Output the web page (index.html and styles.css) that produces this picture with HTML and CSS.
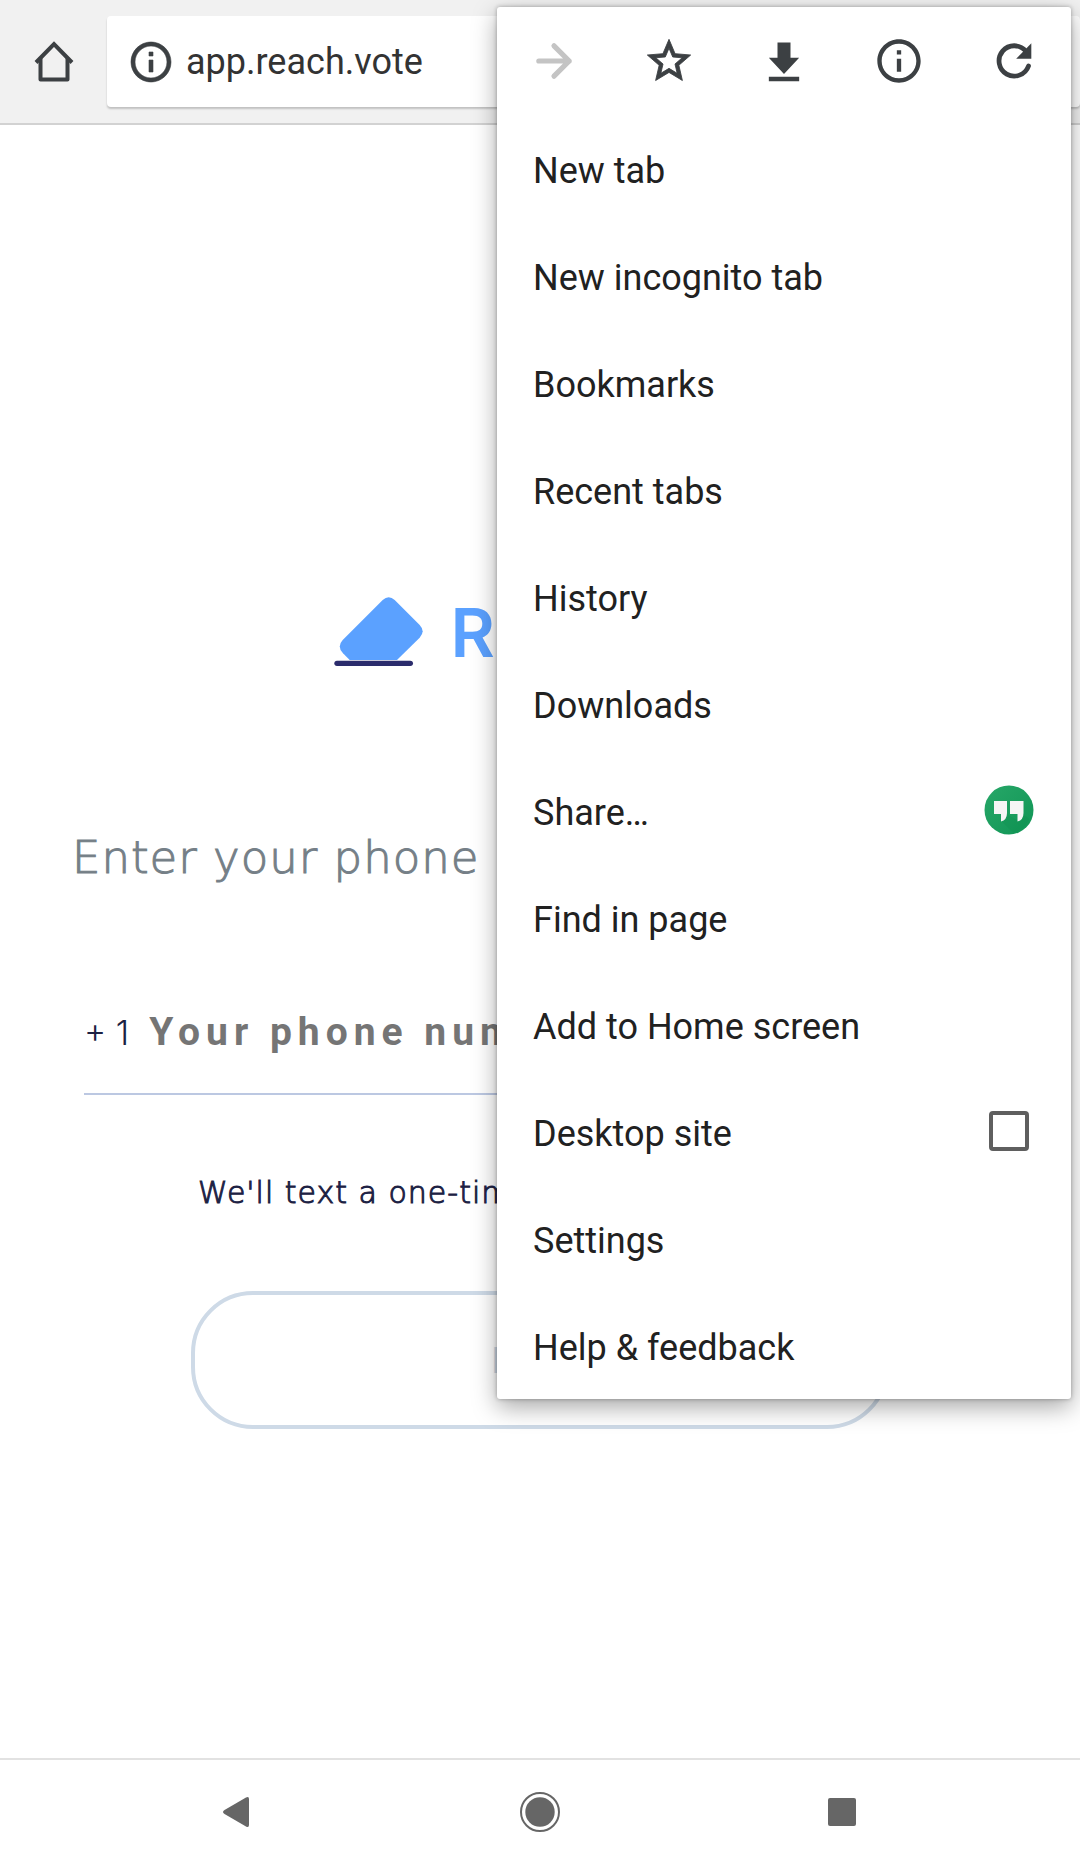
FILE: index.html
```html
<!DOCTYPE html>
<html lang="en">
<head>
<meta charset="utf-8">
<meta name="viewport" content="width=device-width, initial-scale=1">
<title>Reach</title>
<link rel="stylesheet" href="styles.css">
</head>
<body>
<div class="screen">
  <header class="toolbar">
    <button class="home" type="button" aria-label="Home">
      <svg class="home-icon" viewBox="0 0 40 42" fill="none" stroke="#3c4043" stroke-width="4" stroke-linejoin="round" stroke-linecap="round"><path d="M2 21.500 20 3 38 21.500" stroke-linejoin="miter" stroke-linecap="butt"/><path d="M6.500 18V38.500H33.500V18"/></svg>
    </button>
    <div class="omnibox">
      <svg class="site-info" viewBox="0 0 24 24" fill="#3c4043" stroke="#3c4043" stroke-width=".3"><path d="M11 17h2v-6h-2v6zm1-15C6.480 2 2 6.480 2 12s4.480 10 10 10 10-4.480 10-10S17.520 2 12 2zm0 18c-4.410 0-8-3.590-8-8s3.590-8 8-8 8 3.590 8 8-3.590 8-8 8zM11 9h2V7h-2v2z"/></svg>
      <input class="address" type="text" value="app.reach.vote" aria-label="Address">
    </div>
  </header>

  <main class="page">
    <div class="logo">
      <svg class="logo-mark" viewBox="40 49 267 207"><path fill="#5ba1ff" d="M87 238 67 218Q48 198 66 178L186 58Q204 42 222 58L297 133Q315 152 297 171L229 238Z"/><rect x="41" y="240" width="236" height="16" rx="8" fill="#2b2c6c"/></svg>
      <span class="logo-name">REACH</span>
    </div>
    <form class="sign-in">
      <label class="prompt" for="phone">Enter your phone number</label>
      <div class="phone-row">
        <span class="country">+ 1</span>
        <input class="phone" id="phone" type="tel" placeholder="Your phone number">
      </div>
      <p class="hint">We'll text a one-time code</p>
      <button class="next" type="button">NEXT</button>
    </form>
  </main>

  <nav class="system-bar">
    <button class="system-button" type="button" aria-label="Back"><svg class="system-icon" viewBox="0 0 40 40"><path fill="#666" d="M28 5.500Q31 4 31 7V33Q31 36 28 34.500L6.500 22Q3.500 20 6.500 18Z"/></svg></button>
    <button class="system-button" type="button" aria-label="Home screen"><svg class="system-icon" viewBox="0 0 40 40"><circle cx="20" cy="20" r="19" fill="none" stroke="#666" stroke-width="2"/><circle cx="20" cy="20" r="14.700" fill="#666"/></svg></button>
    <button class="system-button" type="button" aria-label="Overview"><svg class="system-icon" viewBox="0 0 40 40"><rect x="6" y="6" width="28" height="28" rx="2" fill="#666"/></svg></button>
  </nav>

  <aside class="menu">
    <div class="actions">
      <button class="action" type="button" aria-label="Forward" disabled><svg class="action-icon" viewBox="0 0 24 24" fill="none" stroke="#c4c4c4" stroke-width="2.400" stroke-linecap="round" stroke-linejoin="round"><path d="M5 12h14M12 5l7 7-7 7"/></svg></button>
      <button class="action" type="button" aria-label="Bookmark"><svg class="action-icon" viewBox="0 0 24 24" fill="#3c4043" stroke="#3c4043" stroke-width=".4"><path d="M22 9.240l-7.190-.62L12 2 9.190 8.630 2 9.240l5.460 4.730L5.820 21 12 17.270 18.180 21l-1.630-7.030L22 9.240zM12 15.400l-3.760 2.270 1-4.280-3.320-2.880 4.380-.38L12 6.100l1.710 4.040 4.380.38-3.320 2.880 1 4.280L12 15.400z"/></svg></button>
      <button class="action" type="button" aria-label="Download"><svg class="action-icon" viewBox="0 0 24 24" fill="#3c4043"><path d="M19 10.500h-4v-7H9v7H5l7 7.500 7-7.500zM5 19.300v2h14v-2H5z"/></svg></button>
      <button class="action" type="button" aria-label="Page info"><svg class="action-icon" viewBox="0 0 24 24" fill="#3c4043"><path d="M11 17h2v-6h-2v6zm1-15C6.480 2 2 6.480 2 12s4.480 10 10 10 10-4.480 10-10S17.520 2 12 2zm0 18c-4.410 0-8-3.590-8-8s3.590-8 8-8 8 3.590 8 8-3.590 8-8 8zM11 9h2V7h-2v2z"/></svg></button>
      <button class="action" type="button" aria-label="Reload"><svg class="action-icon" viewBox="0 0 24 24"><path fill="none" stroke="#3c4043" stroke-width="2.200" stroke-linecap="round" d="M17.500 7.500A7 7 0 1 0 18.700 14.300"/><path fill="#3c4043" d="M20 3.800V11H13z"/></svg></button>
    </div>
    <div class="items">
      <button class="item" type="button">New tab</button>
      <button class="item" type="button">New incognito tab</button>
      <button class="item" type="button">Bookmarks</button>
      <button class="item" type="button">Recent tabs</button>
      <button class="item" type="button">History</button>
      <button class="item" type="button">Downloads</button>
      <button class="item" type="button">Share…
        <svg class="item-end" viewBox="0 0 50 50"><defs><linearGradient id="badge" x1="0" y1="0" x2="1" y2="1"><stop offset="0" stop-color="#27a768"/><stop offset="1" stop-color="#109555"/></linearGradient></defs><circle cx="25" cy="25" r="24.500" fill="url(#badge)"/><path fill="#0d8a4d" opacity=".25" d="M17 36 23 29 34 36 39 29 45 34A25 25 0 0 1 30 48Z"/><path fill="#f5f5f5" d="M10 16H23V28Q23 35 17 36.500V29H10ZM26 16H39.500V28Q39.500 35 33.500 36.500V29H26Z"/></svg>
      </button>
      <button class="item" type="button">Find in page</button>
      <button class="item" type="button">Add to Home screen</button>
      <label class="item">Desktop site
        <span class="item-end"><input class="check" type="checkbox"></span>
      </label>
      <button class="item" type="button">Settings</button>
      <button class="item" type="button">Help &amp; feedback</button>
    </div>
  </aside>
</div>
</body>
</html>
```
FILE: styles.css
```css
* {
  box-sizing: border-box;
}

body {
  margin: 0;
  background: #fff;
  font-family: Roboto, sans-serif;
}

button,
input {
  margin: 0;
  padding: 0;
  border: 0;
  background: none;
  font: inherit;
  color: inherit;
}

svg {
  display: block;
}

.screen {
  position: relative;
  display: flex;
  flex-direction: column;
  min-height: 100vh;
  overflow: hidden;
}

/* Browser toolbar */
.toolbar {
  display: flex;
  padding: 16px 0;
  background: #f1f1f1;
  border-bottom: 2px solid #d2d2d2;
}

.home {
  display: grid;
  place-items: center;
  width: 107px;
}

.home-icon {
  width: 40px;
  height: 42px;
}

.omnibox {
  flex: 1;
  display: flex;
  align-items: center;
  gap: 11px;
  height: 91px;
  padding: 0 20px;
  background: #fff;
  border-radius: 4px;
  box-shadow: 0 2px 2px rgba(0, 0, 0, 0.2);
}

.site-info {
  width: 48px;
  height: 48px;
}

.address {
  flex: 1;
  min-width: 0;
  font-size: 36px;
  color: #333;
}

/* Sign-in page */
.page {
  flex: 1;
  padding: 472px 72px 0;
  font-family: "DejaVu Sans", sans-serif;
  font-weight: 200;
}

.logo {
  display: flex;
  align-items: center;
  justify-content: center;
  gap: 28px;
  height: 69px;
}

.logo-mark {
  width: 89px;
  height: 69px;
}

.logo-name {
  min-width: 296px;
  font-family: Inter, sans-serif;
  font-size: 68px;
  font-weight: 600;
  color: #5ba1ff;
}

.sign-in {
  display: flex;
  flex-direction: column;
}

.prompt {
  margin-top: 164px;
  font-size: 45px;
  line-height: 56px;
  letter-spacing: 1px;
  color: #757f87;
  -webkit-text-stroke: 1px #757f87;
}

.phone-row {
  display: flex;
  align-items: center;
  gap: 20px;
  height: 124px;
  margin: 85px 12px 0;
  border-bottom: 2px solid #bcc8e2;
}

.country {
  font-family: Inter, sans-serif;
  font-size: 34px;
  font-weight: 300;
  color: #1c2143;
}

.phone {
  flex: 1;
  min-width: 0;
  font-family: Roboto, sans-serif;
  font-size: 39px;
  font-weight: 700;
  letter-spacing: 6px;
}

.phone::placeholder {
  color: #757575;
  opacity: 1;
}

.hint {
  margin: 76px 0 0 126px;
  font-size: 30px;
  line-height: 44px;
  letter-spacing: 1px;
  color: #1c2143;
  -webkit-text-stroke: 1px #1c2143;
}

.next {
  align-self: center;
  width: 698px;
  height: 138px;
  margin-top: 76px;
  border: 4px solid #cedae7;
  border-radius: 62px;
  font-family: Inter, sans-serif;
  font-size: 35px;
  font-weight: 700;
  color: #cedae7;
}

/* Android navigation bar */
.system-bar {
  display: flex;
  height: 107px;
  padding: 0 8% 2px;
  border-top: 2px solid #e2e2e2;
}

.system-button {
  flex: 1;
  display: grid;
  place-items: center;
}

.system-icon {
  width: 40px;
  height: 40px;
}

/* Overflow menu */
.menu {
  position: absolute;
  top: 7px;
  right: 9px;
  width: 574px;
  background: #fff;
  border-radius: 3px;
  box-shadow: 0 8px 24px rgba(0, 0, 0, 0.35), 0 0 4px rgba(0, 0, 0, 0.3);
}

.actions {
  display: flex;
  height: 108px;
}

.action {
  flex: 1;
  display: grid;
  place-items: center;
}

.action-icon {
  width: 52px;
  height: 52px;
}

.items {
  display: flex;
  flex-direction: column;
  gap: 4px;
  padding-top: 4px;
}

.item {
  display: flex;
  align-items: center;
  justify-content: space-between;
  height: 103px;
  padding: 0 37px 0 36px;
  font-size: 36px;
  text-align: left;
  color: #212121;
}

.item-end {
  display: grid;
  place-items: center;
  width: 50px;
  height: 50px;
  margin-bottom: 6px;
}

.check {
  appearance: none;
  width: 40px;
  height: 40px;
  border: 4px solid #5f5f5f;
  border-radius: 4px;
}
```
